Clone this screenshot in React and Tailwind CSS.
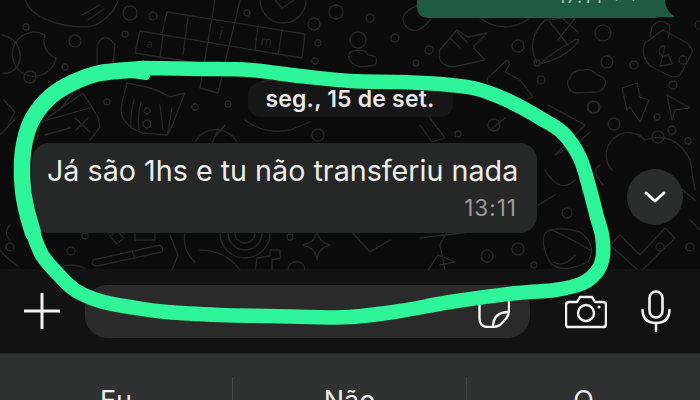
import React from "react";

const pts = [[143,69],[100,73],[72,83],[50,97],[33,118],[25,140],[22,165],[23,190],[27,212],[33,233],[42,255],[57,273],[75,290],[100,301],[130,307],[167,312],[220,315],[267,316],[310,317],[350,317],[400,311],[450,302],[517,293],[555,290],[583,283],[598,270],[603,255],[602,235],[597,217],[590,190],[580,158],[563,133],[540,118],[517,105],[495,95],[473,88],[440,84],[400,82],[350,81],[300,76],[250,70],[200,69],[143,68]];
function smooth(p) {
  let d = `M${p[0][0]} ${p[0][1]}`;
  for (let i = 0; i < p.length - 1; i++) {
    const a = p[Math.max(i - 1, 0)], b = p[i], c = p[i + 1], e = p[Math.min(i + 2, p.length - 1)];
    d += ` C${(b[0] + (c[0] - a[0]) / 6).toFixed(1)} ${(b[1] + (c[1] - a[1]) / 6).toFixed(1)} ${(c[0] - (e[0] - b[0]) / 6).toFixed(1)} ${(c[1] - (e[1] - b[1]) / 6).toFixed(1)} ${c[0]} ${c[1]}`;
  }
  return d;
}

const circles = [[130,13,7],[153,16,4],[125,34,3],[75,41,6],[30,77,6],[65,67,3],[107,102,3],[195,107,3],[228,104,3],[314,24,6],[318,43,3],[315,61,3],[336,12,7],[247,13,3],[318,135,6],[26,27,3],[370,18,4],[358,40,8],[395,38,4],[416,63,3],[429,50,4],[417,87,7],[518,46,6],[537,63,3],[603,33,8],[634,65,4],[607,62,6],[541,80,4],[593,107,6],[673,85,4],[614,124,6],[657,117,3],[494,125,6],[594,107,6],[688,141,3],[672,130,4],[458,134,3],[658,137,6],[10,247,4],[71,251,4],[85,236,3],[290,237,3],[640,212,6],[660,247,4],[690,247,4],[534,265,3],[487,256,6],[518,249,6],[567,213,5],[683,60,4],[699,25,4]];
const doodles = [
  // crossword
  "M167 12L305 34L302 58L140 31L135 53L215 66","M167 12L162 33","M188 17L183 55","M215 0L200 88L218 93L240 0","M258 25L255 50","M282 30L278 55","M163 35L160 57",
  // top scribbles
  "M25 0C30 15 55 27 85 27C100 27 115 12 118 0","M82 15L100 5M88 20L104 9","M260 0A23 23 0 0 0 306 0","M275 0L282 8L294 0",
  // moon + pill + left
  "M45 35A22 22 0 1 0 56 58A18 18 0 0 1 45 35Z","M97 65L97 45Q105 30 115 45L113 66","M2 35Q22 40 20 60Q15 75 3 73",
  // cat
  "M127 83L122 103Q120 113 123 118Q130 130 143 133L167 135Q172 128 177 113L185 93L170 97Q158 90 147 87Z","M134 100Q130 115 131 128M141 102Q137 117 139 130M160 105L163 130M172 108L168 132","M147 108a3 3 0 1 0 .1 0M147 120a4 4 0 1 0 .1 0",
  // tilted box
  "M37 140L40 123L83 93L98 117L100 127L90 140","M37 123L93 107","M60 110L73 93","M75 118L90 132M88 118L76 130","M45 135L70 128",
  // gauge
  "M195 142A24 24 0 0 1 237 142","M215 137L225 125","M212 143L218 130",
  // crossed arm
  "M4 100L15 112L8 125","M0 135L16 118",
  // date blob
  "M250 95Q255 82 270 80L300 82","M245 120Q265 135 290 130L310 122",
  // hand top right
  "M440 50L457 30L468 37L487 33L473 47L485 60L453 67Q436 65 440 50Z","M450 38L460 48M457 32L467 42",
  // top arc
  "M480 18Q505 36 530 18",
  // corn
  "M537 63Q525 40 545 20L565 18","M540 64Q555 50 575 40Q580 38 578 42Q565 58 540 64Z","M550 22L568 45M562 18L578 32M575 18L558 40",
  // lock
  "M645 43L663 30L687 43Q694 50 692 53L680 75Q675 78 670 76L650 66Q640 55 645 43Z","M650 37L652 27Q658 18 668 24Q672 28 668 38","M665 46a5 5 0 1 0 3 8L672 64L660 66L663 55Z",
  // cloud, bolt, arrow
  "M570 90Q565 82 570 78Q572 70 583 70Q592 68 597 75Q608 78 605 85Q602 93 595 92L575 93Z","M622 88L637 83L640 97L649 100L640 122L630 107L627 110Z","M667 95L690 108L675 110L672 120Z",
  // hook hand + scraps
  "M507 60Q512 62 505 72L520 80L533 97L515 105L490 85Q484 80 490 76Z","M350 52Q365 47 368 55Q380 55 375 65L360 67Q345 62 350 52Z",
  "M435 0Q395 10 405 25Q415 38 430 20","M430 118L445 138L432 142L420 125",
  "M548 105L585 125L555 155L575 145L590 132","M490 130L505 118","M415 80L425 105",
  // bottom left
  "M93 260L160 245Q164 248 162 252L97 266Q90 265 93 260Z","M132 251L135 258","M110 236L117 231L124 238L117 244Z",
  "M135 225L135 240L155 240L155 225","M170 235L178 255L172 270","M185 233Q182 250 195 262","M200 250Q225 250 240 270","M220 233A25 25 0 0 0 270 233M228 233A17 17 0 0 0 262 233M235 233A10 10 0 0 0 255 233",
  "M255 270L257 258L270 256L270 250L280 250L280 258L272 260L272 270","M288 270A8 8 0 0 1 305 270","M317 230Q318 242 330 245Q318 248 317 260Q316 248 303 245Q316 242 317 230Z",
  "M60 268Q70 262 85 268","M0 250Q8 260 18 266","M10 240A10 10 0 0 1 10 225",
  // bottom right
  "M545 233Q555 225 580 232Q598 245 588 262Q560 275 550 262Q540 245 545 233Z","M552 230Q570 238 590 250","M553 262Q565 268 575 255",
  "M620 235L640 255L665 228L675 238L640 272L610 245Z","M450 225L440 245L445 270M390 240L370 252L352 232M428 270L438 255L455 262L440 265",
  "M420 238L470 232",
  // middle right
  "M612 170A22 22 0 0 1 645 140M645 140Q675 130 690 160L695 190","M600 165Q590 170 603 185","M665 175L695 200",
  "M545 170Q560 195 575 180","M530 210L555 195","M690 220L700 230",
];

export default function App() {
  return (
    <div className="relative flex h-[400px] w-[700px] flex-col overflow-hidden bg-[#121212] font-['Inter',sans-serif]">
      <div className="relative flex h-[270px] flex-col bg-[#0b0b0b]">
        <svg className="absolute left-0 top-0" width="700" height="270" fill="none" stroke="#282828" strokeWidth="1.3" strokeLinecap="round" strokeLinejoin="round">
          {doodles.map((d, i) => <path key={i} d={d} />)}
          {circles.map(([x, y, r], i) => <circle key={i} cx={x} cy={y} r={r} />)}
          <text x="146" y="47" fontSize="11" fill="#282828" stroke="none" transform="rotate(9 146 47)">a</text>
          <text x="219" y="36" fontSize="13" fill="#282828" stroke="none" transform="rotate(9 219 36)">j</text>
          <text x="260" y="45" fontSize="13" fill="#282828" stroke="none" transform="rotate(9 260 45)">m</text>
        </svg>

        <div className="relative mr-[35px] flex h-[18px] w-[248px] items-end justify-end self-end overflow-visible rounded-b-[10px] bg-[#1f5a45] pb-[12px] pr-[21px]">
          <span className="text-[18px] leading-none tracking-[1px] text-[#a9c4b9]">17:14 ✓✓</span>
          <svg className="absolute left-[240px] top-[2px]" width="24" height="16"><path d="M0 0L8 0Q10 10 18 15Q8 16 0 14Z" fill="#1f5a45" /></svg>
        </div>

        <div className="relative mt-[64px] flex h-[35px] w-[205px] items-center justify-center self-center rounded-[13px] bg-[#161616]">
          <span className="whitespace-nowrap text-[23px] font-semibold leading-none tracking-[0.2px] text-[#e9e9e9]">seg., 15 de set.</span>
        </div>

        <div className="relative ml-[32px] mt-[26px] flex h-[90px] w-[505px] flex-col rounded-[17px] bg-[#262727] pl-[15px] pr-[20px] pt-[9px]">
          <span className="whitespace-nowrap text-[28.7px] leading-[38px] text-[#eeeeee]">Já são 1hs e tu não transferiu nada</span>
          <span className="mt-[5px] self-end text-[22.5px] leading-[26px] tracking-[1px] text-[#9a9a9a]">13:11</span>
        </div>

        <div className="absolute left-[627px] top-[169px] flex h-[56px] w-[56px] items-center justify-center rounded-full bg-[#2b2c2c]">
          <svg width="24" height="14" fill="none" stroke="#ffffff" strokeWidth="3" strokeLinecap="round" strokeLinejoin="round"><path d="M3 3L12 11L21 3" /></svg>
        </div>
      </div>

      <div className="flex h-[84px] items-center pl-[24px]">
        <svg width="36" height="36" className="mt-[-1px] shrink-0" fill="none" stroke="#f2f2f2" strokeWidth="3"><path d="M18 0V36M0 18H36" /></svg>
        <div className="ml-[25px] flex h-[53px] w-[445px] items-center justify-end rounded-[22px] bg-[#2a2a2a] pr-[20px]">
          <svg width="32" height="30" className="mt-[3px]" fill="none" stroke="#f2f2f2" strokeWidth="2.4" strokeLinejoin="round"><path d="M31 2V12Q31 18 26 23L22 27Q19 29 15 29H10Q2 29 1.500 21V2" /><path d="M15 29Q15 14 31 14" /></svg>
        </div>
        <svg width="42" height="34" className="ml-[35px] mt-[1px] shrink-0" fill="none" stroke="#f2f2f2" strokeWidth="2.4" strokeLinejoin="round"><path d="M4 7H12L15 2H27L30 7H38Q41 7 41 10V29Q41 32 38 32H4Q1 32 1 29V10Q1 7 4 7Z" /><circle cx="21" cy="18" r="8" /><circle cx="34" cy="12" r="1.500" fill="#f2f2f2" stroke="none" /></svg>
        <svg width="30" height="42" className="ml-[34px] mt-[-1px] shrink-0" fill="none" stroke="#f2f2f2" strokeWidth="2.6" strokeLinecap="round"><rect x="8.500" y="1.500" width="13" height="26" rx="6.500" /><path d="M1.500 20Q2 33 15 33Q28 33 28.500 20" /><path d="M15 33V41" /></svg>
      </div>

      <div className="flex flex-1 items-start border-t border-[#262626] bg-[#303131] pt-[23px]">
        <div className="flex h-[23px] w-[233px] justify-center border-r border-[#4a4a4a]"><span className="mt-[8px] text-[27px] leading-[32px] text-[#eeeeee]">Eu</span></div>
        <div className="flex h-[23px] w-[234px] justify-center border-r border-[#4a4a4a]"><span className="mt-[8px] text-[27px] leading-[32px] text-[#eeeeee]">Não</span></div>
        <div className="flex h-[23px] w-[233px] justify-center"><span className="mt-[8px] text-[27px] leading-[32px] text-[#eeeeee]">O</span></div>
      </div>

      <svg className="pointer-events-none absolute left-0 top-0" width="700" height="400" fill="none" stroke="#2ef59a" strokeWidth="14.5" strokeLinecap="round" strokeLinejoin="round">
        <path d={smooth(pts)} />
        <path d={smooth(pts.slice(0, 10))} strokeWidth="16.5" />
        <path d="M132 74L146 76" strokeWidth="8" />
      </svg>
    </div>
  );
}
